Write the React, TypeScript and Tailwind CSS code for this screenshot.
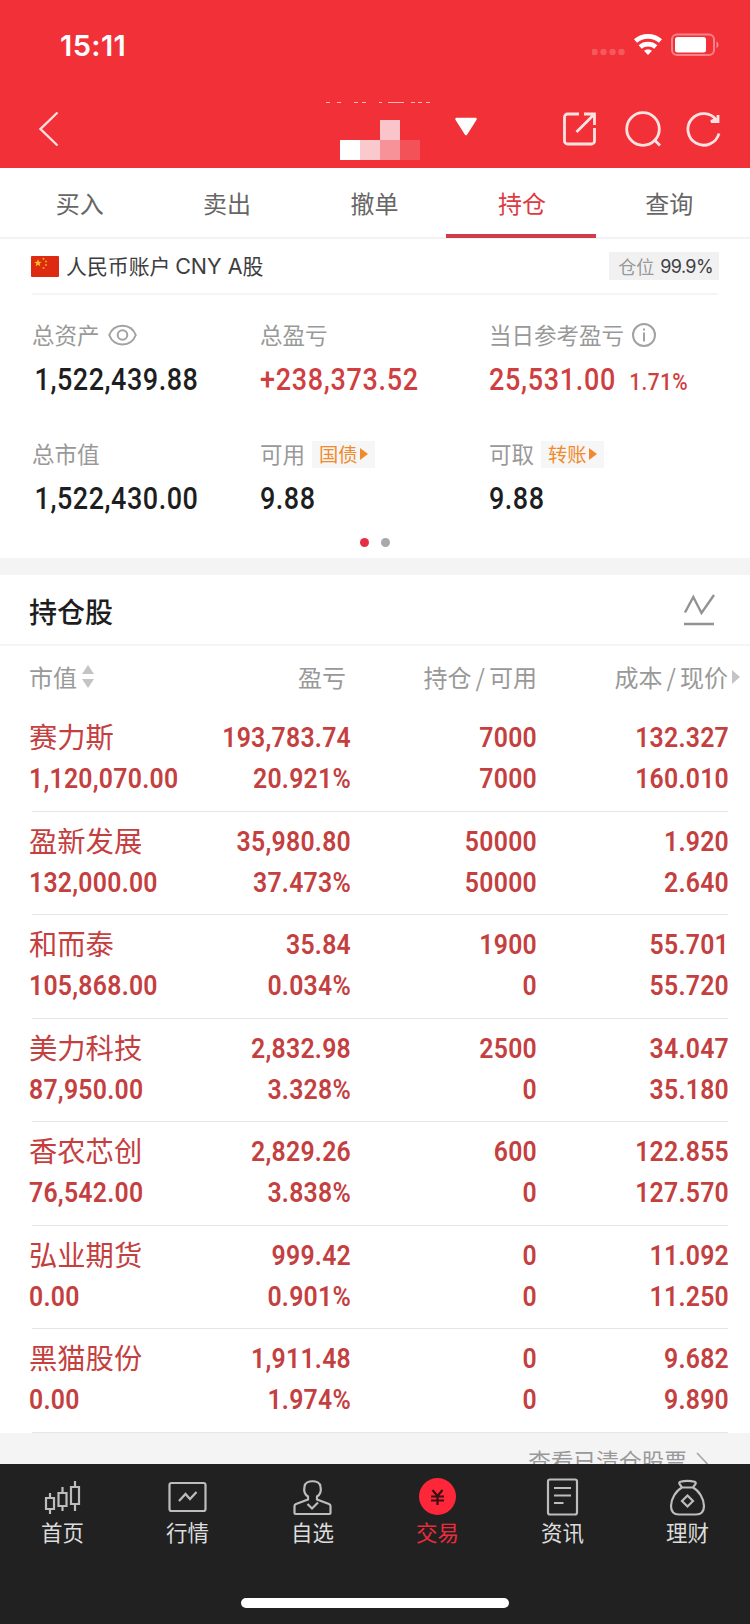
import type { ReactNode } from "react";
import clsx from "clsx";

const TABS = ["买入", "卖出", "撤单", "持仓", "查询"];
const ACTIVE_TAB = "持仓";

interface Holding {
  name: string;
  value: string;
  profit: string;
  rate: string;
  amount: string;
  available: string;
  cost: string;
  price: string;
}

const HOLDINGS: Holding[] = [
  { name: "赛力斯", value: "1,120,070.00", profit: "193,783.74", rate: "20.921%", amount: "7000", available: "7000", cost: "132.327", price: "160.010" },
  { name: "盈新发展", value: "132,000.00", profit: "35,980.80", rate: "37.473%", amount: "50000", available: "50000", cost: "1.920", price: "2.640" },
  { name: "和而泰", value: "105,868.00", profit: "35.84", rate: "0.034%", amount: "1900", available: "0", cost: "55.701", price: "55.720" },
  { name: "美力科技", value: "87,950.00", profit: "2,832.98", rate: "3.328%", amount: "2500", available: "0", cost: "34.047", price: "35.180" },
  { name: "香农芯创", value: "76,542.00", profit: "2,829.26", rate: "3.838%", amount: "600", available: "0", cost: "122.855", price: "127.570" },
  { name: "弘业期货", value: "0.00", profit: "999.42", rate: "0.901%", amount: "0", available: "0", cost: "11.092", price: "11.250" },
  { name: "黑猫股份", value: "0.00", profit: "1,911.48", rate: "1.974%", amount: "0", available: "0", cost: "9.682", price: "9.890" },
];

function StatusBar() {
  return (
    <div className="flex h-[90px] items-center justify-between pl-[60px] pr-[28px]">
      <span className="font-['Inter'] text-[29px] font-semibold leading-none tracking-[0.400px]">
        15:11
      </span>
      <svg width="130" height="26" viewBox="0 0 130 26" fill="none">
        <g fill="#fff" fillOpacity="0.200">
          <circle cx="2.500" cy="20" r="3.200" />
          <circle cx="11.500" cy="20" r="3.200" />
          <circle cx="20.500" cy="20" r="3.200" />
          <circle cx="29.500" cy="20" r="3.200" />
        </g>
        <g stroke="#fff" strokeWidth="4.800">
          <path d="M43.500 9a19 19 0 0 1 25 0" />
          <path d="M48.200 15a12 12 0 0 1 15.600 0" />
        </g>
        <path d="M52 18.800a6.400 6.400 0 0 1 8 0l-4 4.200z" fill="#fff" />
        <rect x="80" y="2.500" width="42" height="20.500" rx="5" stroke="#fff" strokeOpacity="0.400" strokeWidth="2" />
        <rect x="83" y="5" width="31" height="15.500" rx="2.500" fill="#fff" />
        <path d="M124.500 9.500c2.600 1 2.600 5.500 0 6.500z" fill="#fff" fillOpacity="0.450" />
      </svg>
    </div>
  );
}

function TitleBar() {
  return (
    <div className="flex h-[78px] items-center pl-[38px] pr-[28px]">
      <svg width="22" height="36" viewBox="0 0 22 36" fill="none" stroke="#ffe0de" strokeWidth="2.400">
        <path d="M19.500 1.500 2.500 18 19.500 34.500" />
      </svg>

      {/* masked account name */}
      <svg className="ml-[260px]" width="120" height="78" viewBox="0 0 120 78" shapeRendering="crispEdges">
        <path
          d="M6 12.500h4M17 12.500h4M34 12.500h4M42 12.500h4M59 12.500h3M68 12.500h16M91 12.500h4M98 12.500h4M106 12.500h4"
          stroke="#fbb9bb"
        />
        <rect x="60" y="30" width="20" height="20" fill="#f9c5ca" />
        <rect x="20" y="50" width="20" height="20" fill="#fff" />
        <rect x="40" y="50" width="20" height="20" fill="#f9c9cd" />
        <rect x="60" y="50" width="20" height="20" fill="#f79298" />
        <rect x="80" y="50" width="20" height="20" fill="#f35259" />
      </svg>
      <svg className="mb-1 ml-[14px]" width="24" height="20" viewBox="0 0 24 20">
        <path d="M2.500 2h19L12 17z" fill="#fff" stroke="#fff" strokeWidth="2.500" strokeLinejoin="round" />
      </svg>

      <div className="ml-auto flex items-center">
        <svg width="34" height="34" viewBox="0 0 34 34" fill="none" stroke="#ffe3e2" strokeWidth="2.800">
          <path d="M16 2H4.500A3 3 0 0 0 1.500 5v24a3 3 0 0 0 3 3h24a3 3 0 0 0 3-3V16" />
          <path d="M21 2h10.500v11M31 2.500 13.500 20" />
        </svg>
        <svg className="ml-[28px]" width="38" height="38" viewBox="0 0 38 38" fill="none" stroke="#ffe3e2" strokeWidth="2.800">
          <circle cx="18" cy="19" r="16.300" />
          <path d="m29.500 30 5.500 5.500" />
        </svg>
        <svg className="ml-[23px]" width="36" height="36" viewBox="0 0 36 36" fill="none" stroke="#ffe3e2" strokeWidth="2.800">
          <path d="M30.500 9A15.800 15.800 0 1 0 33 22.500" />
          <path d="M32 4v6.500h-7l5-2.500" />
        </svg>
      </div>
    </div>
  );
}

function TabBar() {
  return (
    <nav className="flex h-[71px] border-b-2 border-[#f3f3f5] pl-[6px] pr-[7px]">
      {TABS.map((tab) => {
        const active = tab === ACTIVE_TAB;
        return (
          <button
            key={tab}
            type="button"
            className={clsx(
              "relative flex h-[69px] flex-1 items-center justify-center text-[24px]",
              active ? "text-[#dc3b43]" : "text-[#666]"
            )}
          >
            {tab}
            {active && <span className="absolute -bottom-[1px] -left-[2px] h-1 w-[150px] bg-[#cf3e48]" />}
          </button>
        );
      })}
    </nav>
  );
}

function Flag() {
  return (
    <svg width="28" height="21" viewBox="0 0 28 21" className="-ml-px">
      <rect width="28" height="21" rx="1" fill="#de2a10" />
      <path d="m7 3.300 1 2.500 2.700.1-2.100 1.700.7 2.600L7 8.700l-2.300 1.500.7-2.600-2.100-1.700 2.700-.1z" fill="#fcc419" />
      <g fill="#f0a11c">
        <circle cx="12.500" cy="2.800" r="1.100" />
        <circle cx="15" cy="5.500" r="1.100" />
        <circle cx="15" cy="9" r="1.100" />
        <circle cx="12.500" cy="12" r="1.100" />
      </g>
    </svg>
  );
}

function Tag({ children }: { children: ReactNode }) {
  return (
    <span className="-ml-px flex h-[27px] items-center bg-[#f6f6f7] px-[7px] text-[19.300px] text-[#f18a2c]">
      {children}
      <svg width="8" height="14" viewBox="0 0 8 14" className="ml-[2px]">
        <path d="M0 1v12l8-6z" fill="#f18a2c" />
      </svg>
    </span>
  );
}

interface StatProps {
  label: string;
  value: string;
  extra?: ReactNode;
  rate?: string;
  red?: boolean;
  inset?: boolean;
}

function Stat({ label, value, extra, rate, red, inset }: StatProps) {
  return (
    <div className="h-[119px]">
      <div className="flex h-[30px] items-center gap-[8px] text-[22.500px] text-[#999]">
        {label}
        {extra}
      </div>
      <div
        className={clsx(
          "mt-[14px] flex origin-left scale-x-[0.87] items-baseline gap-[15px] whitespace-nowrap font-['Roboto'] text-[31px] font-medium leading-[32px]",
          red ? "tracking-[0.800px] text-[#cf3f42]" : "tracking-[0.600px] text-[#1d1e21]",
          inset && "pl-[3px]"
        )}
      >
        {value}
        {rate && <span className="text-[24px] tracking-[0.500px]">{rate}</span>}
      </div>
    </div>
  );
}

function Summary() {
  return (
    <section className="h-[319px] px-8">
      <div className="flex h-[56px] items-center border-b-2 border-[#f5f5f6]">
        <Flag />
        <span className="ml-[7px] text-[20.900px] text-[#3d3d40]">
          人民币账户 <span className="font-['Inter'] text-[21.500px]">CNY A</span>股
        </span>
        <span className="-mr-px ml-auto flex h-7 items-center gap-[6px] bg-[#f1f1f2] pl-[9px] pr-[6px] text-[18px] text-[#999]">
          仓位
          <span className="font-['Inter'] tracking-[-0.600px] text-[#404042]">99.9%</span>
        </span>
      </div>

      <div className="grid h-[238px] grid-cols-[228px_229px_1fr] pt-[25px]">
        <Stat
          label="总资产"
          value="1,522,439.88"
          inset
          extra={
            <svg width="29" height="22" viewBox="0 0 29 22" fill="none" stroke="#a2a2a2" strokeWidth="2">
              <path d="M1.200 11C6-1.500 23-1.500 27.800 11 23 23.500 6 23.500 1.200 11z" />
              <circle cx="14.500" cy="11" r="4.800" />
            </svg>
          }
        />
        <Stat label="总盈亏" value="+238,373.52" red />
        <Stat
          label="当日参考盈亏"
          value="25,531.00"
          rate="1.71%"
          red
          extra={
            <svg width="24" height="24" viewBox="0 0 24 24" fill="none" stroke="#a2a2a2" strokeWidth="2">
              <circle cx="12" cy="12" r="11" />
              <path d="M12 9.500v9M12 5.500v2" />
            </svg>
          }
        />
        <Stat label="总市值" value="1,522,430.00" inset />
        <Stat label="可用" value="9.88" extra={<Tag>国债</Tag>} />
        <Stat label="可取" value="9.88" extra={<Tag>转账</Tag>} />
      </div>
      <div className="flex justify-center gap-3 pt-[5px]">
        <span className="size-[9px] rounded-full bg-[#e62e45]" />
        <span className="size-[9px] rounded-full bg-[#a9a9ac]" />
      </div>
    </section>
  );
}

const COLUMNS = "grid grid-cols-[170px_152px_186px_192px]";

function Pair({ top, bottom }: { top: string; bottom: string }) {
  return (
    <div className="origin-right scale-x-[0.87] text-right">
      <div>{top}</div>
      <div>{bottom}</div>
    </div>
  );
}

function Holdings() {
  return (
    <section>
      <div className="flex h-[71px] items-center justify-between border-b-2 border-[#f5f5f6] pl-[29px] pr-[35px]">
        <h2 className="pt-[2px] text-[28px] font-medium text-[#1d1e22]">持仓股</h2>
        <svg width="32" height="32" viewBox="0 0 32 32" fill="none" stroke="#929292" strokeWidth="2.400">
          <path d="M2 18.500 10.300 3l8.200 16L31 1M1 30h30" />
        </svg>
      </div>

      <div className={clsx(COLUMNS, "h-[62px] items-center pb-px pl-[29px] text-right text-[24px] text-[#999]")}>
        <div className="flex items-center gap-[5px]">
          市值
          <svg width="12" height="23" viewBox="0 0 12 23" fill="#c4c4c4">
            <path d="M0 9h12L6 0zM0 14h12l-6 9z" />
          </svg>
        </div>
        <div className="pr-[5px]">盈亏</div>
        <div>
          持仓<span className="mx-[4px]">/</span>可用
        </div>
        <div className="relative pr-px">
          成本<span className="mx-[4px]">/</span>现价
          <svg className="absolute -right-[11px] top-[11px]" width="8" height="14" viewBox="0 0 8 14">
            <path d="M0 0v14l8-7z" fill="#c4c4c4" />
          </svg>
        </div>
      </div>

      {HOLDINGS.map((h) => (
        <div key={h.name} className="h-[103.500px] pl-[29px]">
          <div
            className={clsx(
              COLUMNS,
              "h-[102.500px] pt-[9px] font-['Roboto'] text-[28.500px] font-semibold leading-[41px] tracking-[0.300px] text-[#c4403f]"
            )}
          >
            <div>
              <div className="-mt-[2px] mb-[2px] font-['Noto_Sans_CJK_SC'] text-[28.300px] font-normal tracking-normal">
                {h.name}
              </div>
              <div className="origin-left scale-x-[0.87]">{h.value}</div>
            </div>
            <Pair top={h.profit} bottom={h.rate} />
            <Pair top={h.amount} bottom={h.available} />
            <Pair top={h.cost} bottom={h.price} />
          </div>
          <div className="ml-[3px] mr-[22px] h-px bg-[#e6e6e8]" />
        </div>
      ))}
    </section>
  );
}

const NAV: { label: string; icon: ReactNode }[] = [
  {
    label: "首页",
    icon: (
      <path d="M7 15v5M7 31v5M3 20h8v11H3zM19.500 9v6M19.500 28v5M15.500 15h8v13h-8zM32 3v6M32 26v7M28 9h8v17h-8z" />
    ),
  },
  {
    label: "行情",
    icon: (
      <>
        <rect x="1.500" y="5" width="36" height="28" rx="2" />
        <path d="m11 23 6.500-7 4.500 5 6.500-7" />
      </>
    ),
  },
  {
    label: "自选",
    icon: (
      <>
        <path d="M15 18.500c-3.500-2-4.500-5-3.500-10 1-7 15-7 16 0 1 5 0 8-3.500 10v3l12 4.500q1.500.7 1.500 2V35q0 1-1 1h-34q-1 0-1-1v-7q0-1.300 1.500-2l12-4.500z" />
        <path d="m14.500 26 4.500 4.500 6-6" />
      </>
    ),
  },
  {
    label: "交易",
    icon: (
      <>
        <circle cx="19.500" cy="18.500" r="18.500" fill="#fd2739" stroke="none" />
        <path d="m14.500 12 5 6 5-6M13 18.500h13M13 22.500h13M19.500 18v9" stroke="#3a1014" />
      </>
    ),
  },
  {
    label: "资讯",
    icon: (
      <>
        <rect x="5" y="1.500" width="29" height="35" rx="2" />
        <path d="M11 10h17M11 17.500h17M11 25h9.500" />
      </>
    ),
  },
  {
    label: "理财",
    icon: (
      <>
        <path d="M14 9.500 11.500 6q-.8-1.500.8-2.200 7.200-2 14.400 0 1.600.7.800 2.200L25 9.500zM14 9.500C8 12.500 3 21 3 28q0 8.500 8 8.500h17q8 0 8-8.500c0-7-5-15.500-11-18.500" />
        <path d="m19.500 17.500 5.500 5.500-5.500 5.500L14 23z" />
      </>
    ),
  },
];

function BottomNav() {
  return (
    <footer className="flex h-[160px] shrink-0 flex-col bg-[#212121]">
      <div className="grid h-[134px] grid-cols-6 pt-[14px]">
        {NAV.map(({ label, icon }) => (
          <div
            key={label}
            className={clsx(
              "flex flex-col items-center text-[21.500px] leading-[31px]",
              label === "交易" ? "text-[#ec2c3e]" : "text-[#dcdcdc]"
            )}
          >
            <svg width="39" height="38" viewBox="0 0 39 38" fill="none" stroke="#bdbdbd" strokeWidth="2.200">
              {icon}
            </svg>
            {label}
          </div>
        ))}
      </div>
      <div className="mx-auto h-[10px] w-[268px] rounded-full bg-white" />
    </footer>
  );
}

export default function App() {
  return (
    <main className="flex h-[1624px] w-[750px] flex-col overflow-hidden bg-white font-['Noto_Sans_CJK_SC',sans-serif]">
      <header className="h-[168px] shrink-0 bg-[#f23037] text-white">
        <StatusBar />
        <TitleBar />
      </header>
      <TabBar />
      <Summary />
      <div className="h-[17px] shrink-0 bg-[#f4f4f5]" />
      <Holdings />
      <div className="flex min-h-0 flex-1 items-start justify-end overflow-hidden bg-[#f4f4f5] pr-[42px] text-[22.700px] text-[#999]">
        <span className="mt-[11px]">查看已清仓股票</span>
        <svg className="ml-[9px] mt-[19px]" width="12" height="24" viewBox="0 0 12 24" fill="none" stroke="#aaa" strokeWidth="1.800">
          <path d="m1 1 10 10.500L1 22" />
        </svg>
      </div>
      <BottomNav />
    </main>
  );
}
